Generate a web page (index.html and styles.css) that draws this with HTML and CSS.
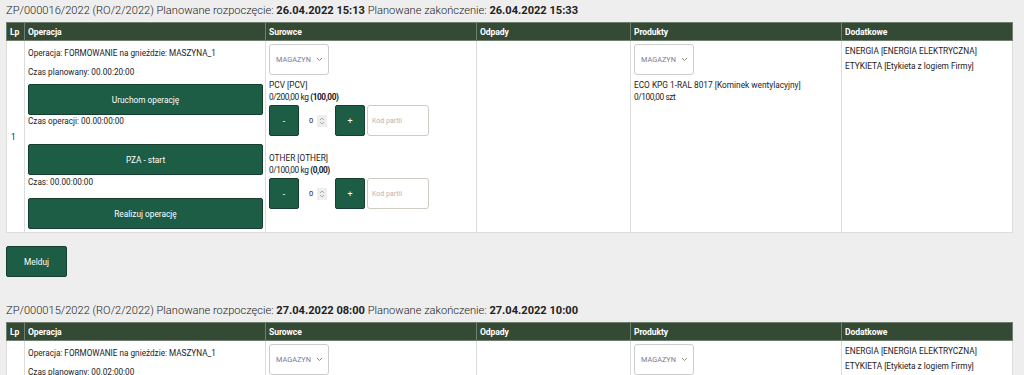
FILE: index.html
```html
<!DOCTYPE html>
<html lang="pl">
<head>
    <meta charset="UTF-8">
    <title>Zlecenia produkcyjne</title>
    <link rel="stylesheet" href="styles.css">
</head>
<body>
    <!-- zlecenie 1 -->
    <div class="order">
        <div class="order-title">ZP/000016/2022 (RO/2/2022) Planowane rozpoczęcie: <b>26.04.2022 15:13</b> Planowane zakończenie: <b>26.04.2022 15:33</b></div>
        <table class="ops">
            <colgroup>
                <col class="c-lp"><col class="c-op"><col class="c-raw"><col class="c-waste"><col class="c-prod"><col class="c-extra">
            </colgroup>
            <thead>
                <tr><th>Lp</th><th>Operacja</th><th>Surowce</th><th>Odpady</th><th>Produkty</th><th>Dodatkowe</th></tr>
            </thead>
            <tbody>
                <tr>
                    <td class="lp">1</td>
                    <td class="op">
                        <div class="line first">Operacja: FORMOWANIE na gnieździe: MASZYNA_1</div>
                        <div class="line plan">Czas planowany: 00.00:20:00</div>
                        <button class="btn wide">Uruchom operację</button>
                        <div class="line timer">Czas operacji: 00.00:00:00</div>
                        <button class="btn wide">PZA - start</button>
                        <div class="line timer short">Czas: 00.00:00:00</div>
                        <button class="btn wide">Realizuj operację</button>
                    </td>
                    <td>
                        <div class="select">MAGAZYN <svg width="7" height="5" viewBox="0 0 7 5"><path d="M1 1l2.5 2.5L6 1" fill="none" stroke="#888" stroke-width="1"/></svg></div>
                        <div class="item">
                            <div class="line">PCV [PCV]</div>
                            <div class="line amount">0/200,00 kg <b>(100,00)</b></div>
                            <div class="qty">
                                <button class="btn sq">-</button>
                                <span class="num">0<span class="spin"><svg width="6" height="8" viewBox="0 0 6 8"><path d="M1 3l2-2 2 2M1 5l2 2 2-2" fill="none" stroke="#999" stroke-width="0.8"/></svg></span></span>
                                <button class="btn sq">+</button>
                                <span class="batch">Kod partii</span>
                            </div>
                        </div>
                        <div class="item second">
                            <div class="line">OTHER [OTHER]</div>
                            <div class="line amount">0/100,00 kg <b>(0,00)</b></div>
                            <div class="qty">
                                <button class="btn sq">-</button>
                                <span class="num">0<span class="spin"><svg width="6" height="8" viewBox="0 0 6 8"><path d="M1 3l2-2 2 2M1 5l2 2 2-2" fill="none" stroke="#999" stroke-width="0.8"/></svg></span></span>
                                <button class="btn sq">+</button>
                                <span class="batch">Kod partii</span>
                            </div>
                        </div>
                    </td>
                    <td></td>
                    <td>
                        <div class="select">MAGAZYN <svg width="7" height="5" viewBox="0 0 7 5"><path d="M1 1l2.5 2.5L6 1" fill="none" stroke="#888" stroke-width="1"/></svg></div>
                        <div class="item">
                            <div class="line">ECO KPG 1-RAL 8017 [Kominek wentylacyjny]</div>
                            <div class="line amount">0/100,00 szt</div>
                        </div>
                    </td>
                    <td class="extra">
                        <div class="line">ENERGIA [ENERGIA ELEKTRYCZNA]</div>
                        <div class="line">ETYKIETA [Etykieta z logiem Firmy]</div>
                    </td>
                </tr>
            </tbody>
        </table>
        <button class="btn report">Melduj</button>
    </div>

    <!-- zlecenie 2 -->
    <div class="order">
        <div class="order-title">ZP/000015/2022 (RO/2/2022) Planowane rozpoczęcie: <b>27.04.2022 08:00</b> Planowane zakończenie: <b>27.04.2022 10:00</b></div>
        <table class="ops">
            <colgroup>
                <col class="c-lp"><col class="c-op"><col class="c-raw"><col class="c-waste"><col class="c-prod"><col class="c-extra">
            </colgroup>
            <thead>
                <tr><th>Lp</th><th>Operacja</th><th>Surowce</th><th>Odpady</th><th>Produkty</th><th>Dodatkowe</th></tr>
            </thead>
            <tbody>
                <tr>
                    <td class="lp">1</td>
                    <td class="op">
                        <div class="line first">Operacja: FORMOWANIE na gnieździe: MASZYNA_1</div>
                        <div class="line plan">Czas planowany: 00.02:00:00</div>
                        <button class="btn wide">Uruchom operację</button>
                    </td>
                    <td>
                        <div class="select">MAGAZYN <svg width="7" height="5" viewBox="0 0 7 5"><path d="M1 1l2.5 2.5L6 1" fill="none" stroke="#888" stroke-width="1"/></svg></div>
                    </td>
                    <td></td>
                    <td>
                        <div class="select">MAGAZYN <svg width="7" height="5" viewBox="0 0 7 5"><path d="M1 1l2.5 2.5L6 1" fill="none" stroke="#888" stroke-width="1"/></svg></div>
                    </td>
                    <td class="extra">
                        <div class="line">ENERGIA [ENERGIA ELEKTRYCZNA]</div>
                        <div class="line">ETYKIETA [Etykieta z logiem Firmy]</div>
                    </td>
                </tr>
            </tbody>
        </table>
    </div>
</body>
</html>
```

FILE: styles.css
```css
/* ogólne */
body {
    margin: 0;
    padding: 0 12px 0 6px;
    background: #eeeeee;
    font-family: Roboto, 'Liberation Sans', sans-serif;
    color: #222;
    overflow: hidden;
}

.order-title {
    font-size: 11.1px;
    font-weight: 300;
    line-height: 14px;
    padding-top: 4px;
    height: 18px;
    color: #222;
}

.order-title b {
    font-weight: 700;
}

/* tabela operacji */
.ops {
    width: 1006px;
    border-collapse: collapse;
    table-layout: fixed;
    background: #fff;
    font-size: 8.3px;
}

.c-lp { width: 18px; }
.c-op { width: 241px; }
.c-raw { width: 211px; }
.c-waste { width: 154px; }
.c-prod { width: 211px; }
.c-extra { width: 171px; }

.ops th {
    background: #344a34;
    color: #fff;
    font-weight: 700;
    text-align: left;
    height: 17px;
    padding: 0 3px;
    border: 1px solid #6f806e;
    font-size: 8.6px;
    line-height: 10px;
    letter-spacing: -0.1px;
}

.ops td {
    border: 1px solid #dddddd;
    vertical-align: top;
    padding: 3px;
}

.ops td.lp {
    vertical-align: middle;
    padding-left: 4px;
}

.line {
    line-height: 12px;
    white-space: nowrap;
}

.line b {
    font-weight: 700;
}

.amount {
    letter-spacing: -0.4px;
}

/* kolumna operacji */
.op {
    font-size: 8.2px;
}

.op .first {
    margin-top: 3px;
}

.op .plan {
    margin-top: 7px;
    margin-bottom: 6px;
}

.op .timer {
    margin-bottom: 17px;
}

.op .timer.short {
    margin-top: 1px;
    margin-bottom: 10px;
}

/* przyciski */
.btn {
    display: block;
    background: #1d5c45;
    border: 1px solid #15402f;
    border-radius: 2px;
    color: #fff;
    font-family: inherit;
    font-size: 8.3px;
    cursor: pointer;
}

.btn.wide {
    width: 235px;
    height: 31px;
}

.btn.sq {
    width: 30px;
    height: 31px;
    font-size: 9px;
}

.btn.report {
    width: 61px;
    height: 31px;
    margin: 13px 0 23px;
}

/* pola wyboru */
.select {
    display: flex;
    align-items: center;
    justify-content: space-between;
    width: 60px;
    height: 31px;
    box-sizing: border-box;
    padding: 0 5px 0 6px;
    border: 1px solid #cccccc;
    border-radius: 3px;
    background: #fff;
    color: #7d7a94;
    font-size: 7.3px;
}

.item {
    margin-top: 4px;
}

.item.second {
    margin-top: 16px;
}

.qty {
    display: flex;
    align-items: center;
    margin-top: 2px;
}

.num {
    display: flex;
    align-items: center;
    gap: 4px;
    width: 36px;
    padding-left: 10px;
    box-sizing: border-box;
    font-size: 7.5px;
}

.spin {
    display: flex;
    align-items: center;
    justify-content: center;
    width: 10px;
    height: 12px;
    background: #eeeeee;
}

.batch {
    display: flex;
    align-items: center;
    width: 62px;
    height: 31px;
    box-sizing: border-box;
    margin-left: 2px;
    padding-left: 4px;
    border: 1px solid #cfcbc2;
    border-radius: 3px;
    color: #b5b5b5;
    font-size: 7px;
}

.extra {
    padding-top: 5px;
}

.extra .line {
    line-height: 15px;
}
```
